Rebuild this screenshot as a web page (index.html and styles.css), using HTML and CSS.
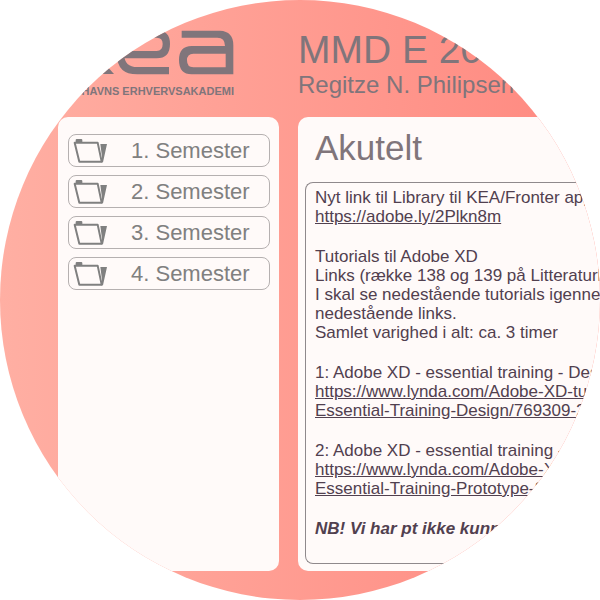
FILE: index.html
```html
<!DOCTYPE html>
<html lang="da">
<head>
<meta charset="utf-8">
<title>MMD E – KEA</title>
<link rel="stylesheet" href="styles.css">
</head>
<body>
<svg class="defs" aria-hidden="true">
  <symbol id="folder" viewBox="70 84 105 75">
    <path fill="currentColor" d="M78 98V90Q78 87 81 87H95Q98 87 98 90V98Z"/>
    <path fill="none" stroke="currentColor" stroke-width="6" stroke-linejoin="round" d="M75 98H144L156 155H89Z"/>
    <path fill="currentColor" d="M152 102H172L160 157H154L157 140Z"/>
  </symbol>
</svg>
<div class="stage">
  <header class="brand">
    <svg class="logo" viewBox="0 90 522 135" role="img" aria-label="kea">
      <path d="M50 140H88L162 222H130Z"/>
      <path class="logo-line" d="M327 212H232Q182 212 182 164H290Q319 164 319 132Q319 102 290 102H235Q182 102 182 164"/>
      <path fill-rule="evenodd" d="M365 92H480Q520 94 520 135V223H395Q357 223 357 180Q357 138 395 138H495Q495 113 472 113H365ZM400 161Q381 161 381 181Q381 202 400 202H497V161Z"/>
    </svg>
    <div class="school">KØBENHAVNS ERHVERVSAKADEMI</div>
  </header>
  <header class="heading">
    <h1>MMD E 20</h1>
    <p>Regitze N. Philipsen</p>
  </header>
  <nav class="panel menu">
    <a href="#s1"><svg><use href="#folder"/></svg><span>1. Semester</span></a>
    <a href="#s2"><svg><use href="#folder"/></svg><span>2. Semester</span></a>
    <a href="#s3"><svg><use href="#folder"/></svg><span>3. Semester</span></a>
    <a href="#s4"><svg><use href="#folder"/></svg><span>4. Semester</span></a>
  </nav>
  <main class="panel news">
    <h2>Akutelt</h2>
    <article>
      <p>Nyt link til Library til KEA/Fronter app<br><a href="#library">https://adobe.ly/2Plkn8m</a></p>
      <p>Tutorials til Adobe XD<br>Links (række 138 og 139 på Litteraturli<br>I skal se nedestående tutorials igennem<br>nedestående links.<br>Samlet varighed i alt: ca. 3 timer</p>
      <p>1: Adobe XD - essential training - Des<br><a href="#design">https://www.lynda.com/Adobe-XD-tut<br>Essential-Training-Design/769309-2</a></p>
      <p>2: Adobe XD - essential training -<br><a href="#prototype">https://www.lynda.com/Adobe-XD<br>Essential-Training-Prototype-S</a></p>
      <p><strong>NB! Vi har pt ikke kunn</strong></p>
    </article>
  </main>
</div>
</body>
</html>
```
FILE: styles.css
```css
* {
  box-sizing: border-box;
}

body {
  margin: 0;
  background: #fff;
  font-family: "Liberation Sans", Arial, sans-serif;
}

h1, h2, p {
  margin: 0;
  font-weight: 400;
}

.defs {
  position: absolute;
  width: 0;
  height: 0;
}

.stage {
  width: 100%;
  aspect-ratio: 1;
  padding: 30px 0 29px 58px;
  display: grid;
  grid-template-columns: 221px minmax(0, 1fr);
  grid-template-rows: auto 1fr;
  column-gap: 19px;
  row-gap: 17px;
  background: linear-gradient(90deg, #ffafa3, #ff887f);
  clip-path: circle(50%);
  overflow: hidden;
  white-space: nowrap;
}

.brand,
.heading {
  color: #80757b;
}

.brand {
  width: 176px;
  display: flex;
  flex-direction: column;
  align-items: flex-end;
  gap: 8px;
}

.logo {
  width: 174px;
  height: 45px;
  fill: currentColor;
}

.logo-line {
  fill: none;
  stroke: currentColor;
  stroke-width: 22;
}

.school {
  font: 700 11px/16px "Liberation Sans Narrow", "Liberation Sans", sans-serif;
}

.heading h1 {
  font-size: 39px;
  line-height: 40px;
}

.heading p {
  font-size: 24px;
  line-height: 30px;
}

.panel {
  background: #fffaf9;
  border-radius: 10px;
}

.menu {
  padding: 17px 9px 0 10px;
  display: flex;
  flex-direction: column;
  gap: 8px;
}

.menu a {
  height: 33px;
  padding-left: 4px;
  display: flex;
  align-items: center;
  border: 1px solid #b5b0b0;
  border-radius: 8px;
  color: #808080;
  font-size: 22px;
  text-decoration: none;
}

.menu svg {
  width: 35px;
  height: 25px;
  margin-right: 23px;
}

.news {
  padding: 11px 0 7px 7px;
  display: flex;
  flex-direction: column;
  gap: 14px;
}

.news h2 {
  padding-left: 10px;
  color: #80757b;
  font-size: 35px;
  line-height: 40px;
}

.news article {
  flex: 1;
  padding: 5px 0 0 9px;
  display: flex;
  flex-direction: column;
  gap: 21px;
  border: 1px solid #8f898c;
  border-right: 0;
  border-radius: 8px 0 0 8px;
  color: #51404f;
  font-size: 17px;
  line-height: 19px;
}

.news a {
  color: inherit;
}

.news strong {
  font-style: italic;
}
```
